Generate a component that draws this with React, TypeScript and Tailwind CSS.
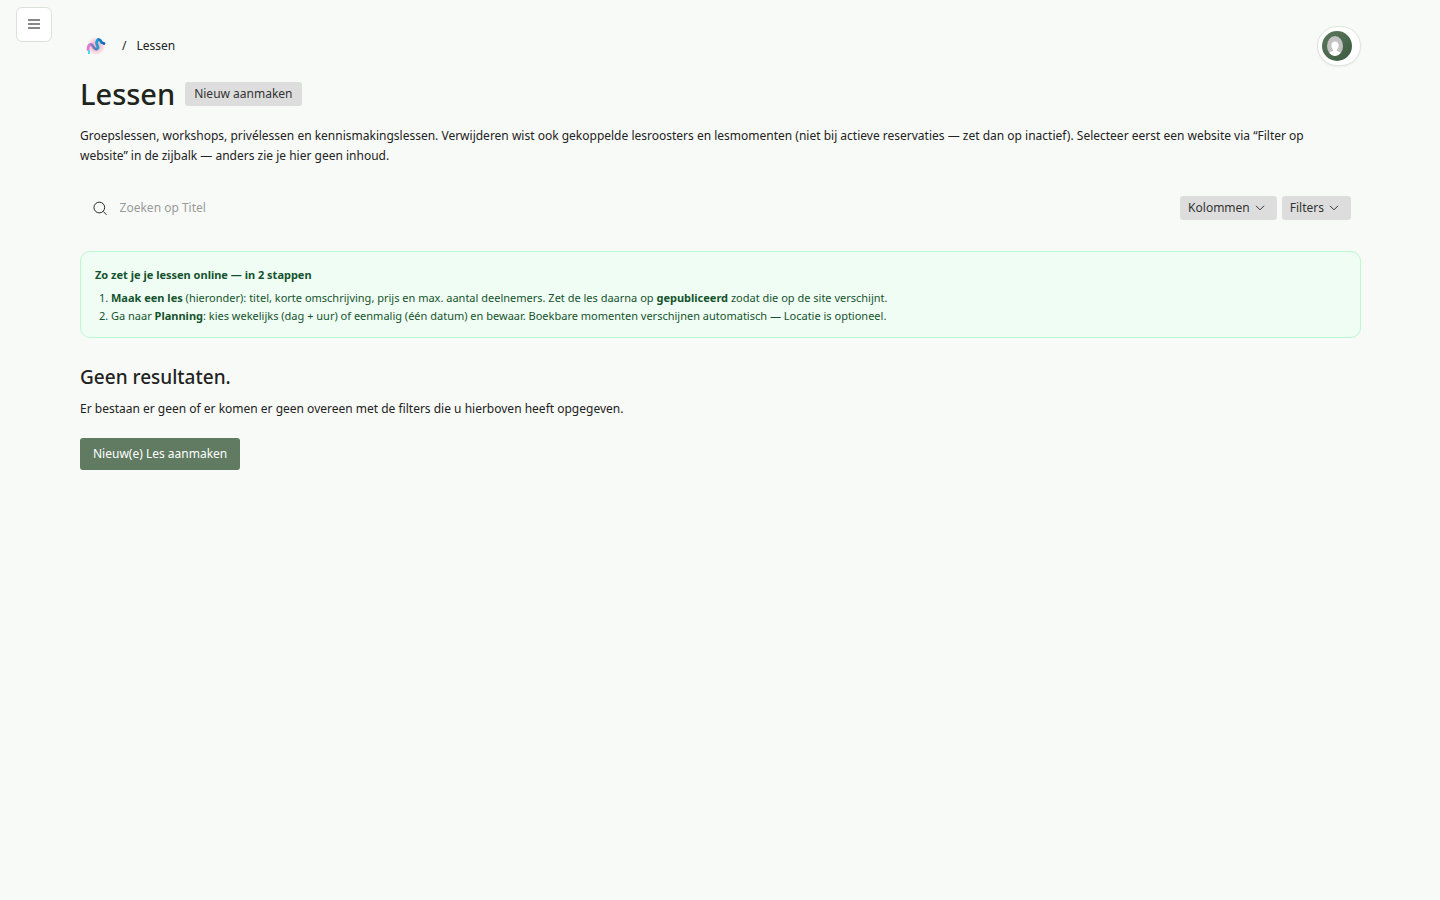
import { useState } from 'react'
import type { ReactNode } from 'react'

function Chevron() {
  return (
    <svg width="10" height="6" viewBox="0 0 10 6" fill="none" stroke="currentColor" aria-hidden="true">
      <path d="M1 0.8 5 4.8 9 0.8" />
    </svg>
  )
}

function Logo() {
  return (
    <svg width="20" height="18" viewBox="0 0 20 18" fill="none" aria-hidden="true">
      <defs>
        <radialGradient id="logo-glow">
          <stop offset="0.4" stopColor="#fbb3c9" stopOpacity="0.95" />
          <stop offset="1" stopColor="#fbc5d5" stopOpacity="0.15" />
        </radialGradient>
        <linearGradient id="logo-line" x1="1" y1="12" x2="19" y2="5" gradientUnits="userSpaceOnUse">
          <stop offset="0" stopColor="#f56ccf" />
          <stop offset="0.2" stopColor="#d67fd0" />
          <stop offset="0.4" stopColor="#4a7fb8" />
          <stop offset="0.6" stopColor="#1ba5d6" />
          <stop offset="1" stopColor="#0b55b0" />
        </linearGradient>
      </defs>
      <circle cx="10" cy="9" r="9" fill="url(#logo-glow)" />
      <path
        d="M2 12.500 2.500 9.500Q4 6.500 6 8L8 11Q11 13.500 12 10.500L10.500 6Q11 2.500 13 2.500Q14.500 3 15.500 5.500L18 6.500"
        stroke="url(#logo-line)"
        strokeWidth="2.8"
        strokeLinecap="round"
        strokeLinejoin="round"
      />
      <path d="M3 13V17" stroke="#4dd8ec" strokeWidth="2" />
    </svg>
  )
}

function Avatar() {
  return (
    <svg width="30" height="30" viewBox="0 0 30 30" aria-hidden="true">
      <defs>
        <clipPath id="avatar-clip">
          <ellipse cx="13" cy="15" rx="8" ry="10" />
        </clipPath>
        <linearGradient id="avatar-bg" x1="0" y1="0" x2="1" y2="1">
          <stop offset="0" stopColor="#5a7a5c" />
          <stop offset="1" stopColor="#3d5a40" />
        </linearGradient>
      </defs>
      <circle cx="15" cy="15" r="15" fill="url(#avatar-bg)" />
      <g clipPath="url(#avatar-clip)">
        <rect x="4" y="4" width="18" height="22" fill="#c3c3c3" />
        <path
          d="M13 10.500c2.400 0 3.600 1.700 3.600 4.100 0 1.700-.7 3-1.600 3.900v1.500c2.500.6 4.500 1.600 5 6H6c.5-4.400 2.500-5.400 5-6v-1.500c-.9-.9-1.600-2.200-1.600-3.900 0-2.400 1.200-4.100 3.600-4.100z"
          fill="#fff"
        />
      </g>
    </svg>
  )
}

function Pill({ children, menu }: { children: ReactNode; menu?: boolean }) {
  return (
    <button
      type="button"
      className={`flex h-6 items-center gap-[5px] rounded-[3px] bg-[#dddddd] text-[#333333] hover:bg-[#d0d0d0] ${
        menu ? 'pr-3 pl-2' : 'px-[9px]'
      }`}
    >
      {children}
      {menu && <Chevron />}
    </button>
  )
}

export default function App() {
  const [query, setQuery] = useState('')

  return (
    <div className="min-h-screen bg-[#f8faf7] pr-[79px] pl-20 font-['Noto_Sans',sans-serif] text-[12px] leading-5 text-[#222222]">
      <button
        type="button"
        aria-label="Menu"
        className="absolute top-[7px] left-4 flex h-[35px] w-9 items-center justify-center rounded-md border border-[#d9e2d8] bg-white text-[#888888]"
      >
        <svg width="12" height="11" viewBox="0 0 12 11" fill="currentColor" aria-hidden="true">
          <path d="M0 0h12v2H0zM0 4h12v2H0zM0 8h12v2H0z" />
        </svg>
      </button>

      <header className="flex items-center justify-between pt-[26px]">
        <nav className="flex items-center" aria-label="Kruimelpad">
          <a href="#" aria-label="Dashboard" className="ml-1.5">
            <Logo />
          </a>
          <span className="mr-2.5 ml-4">/</span>
          <span>Lessen</span>
        </nav>
        <button
          type="button"
          aria-label="Account"
          className="flex h-10 w-11 items-center rounded-full border border-[#dde5dc] bg-white pl-1 shadow-xs"
        >
          <Avatar />
        </button>
      </header>

      <main>
        <div className="mt-2 flex h-10 items-center gap-2.5">
          <h1 className="text-[29px] leading-10 font-medium text-[#20251c]">Lessen</h1>
          <Pill>Nieuw aanmaken</Pill>
        </div>
        <p className="mt-3 pr-10">
          Groepslessen, workshops, privélessen en kennismakingslessen. Verwijderen wist ook gekoppelde lesroosters en
          lesmomenten (niet bij actieve reservaties — zet dan op inactief). Selecteer eerst een website via “Filter op
          website” in de zijbalk — anders zie je hier geen inhoud.
        </p>

        <div className="mt-[30px] flex items-center gap-[5px] pr-2.5 pl-3">
          <label className="flex flex-1 items-center gap-[11px]">
            <svg width="17" height="17" viewBox="0 0 17 17" fill="none" stroke="#222222" aria-hidden="true">
              <circle cx="7.500" cy="7.500" r="5.500" />
              <path d="m11.500 11.500 3.500 3.500" />
            </svg>
            <input
              type="text"
              aria-label="Zoeken op Titel"
              placeholder="Zoeken op Titel"
              value={query}
              onChange={(e) => setQuery(e.target.value)}
              className="w-full bg-transparent outline-none placeholder:text-[#9a9a9a]"
            />
          </label>
          <Pill menu>Kolommen</Pill>
          <Pill menu>Filters</Pill>
        </div>

        <section className="mt-[31px] rounded-[10px] border border-[#bbf7d0] bg-[#f0fdf4] px-3.5 pt-3.5 pb-3 text-[11px] leading-[18px] text-[#14532d]">
          <h2 className="mb-[5px] font-bold">Zo zet je je lessen online — in 2 stappen</h2>
          <ol className="list-decimal pl-4">
            <li>
              <strong>Maak een les</strong> (hieronder): titel, korte omschrijving, prijs en max. aantal deelnemers. Zet
              de les daarna op <strong>gepubliceerd</strong> zodat die op de site verschijnt.
            </li>
            <li>
              Ga naar <strong>Planning</strong>: kies wekelijks (dag + uur) of eenmalig (één datum) en bewaar. Boekbare
              momenten verschijnen automatisch — Locatie is optioneel.
            </li>
          </ol>
        </section>

        <h2 className="mt-[27px] text-[19px] leading-6 font-medium">Geen resultaten.</h2>
        <p className="mt-2.5">Er bestaan er geen of er komen er geen overeen met de filters die u hierboven heeft opgegeven.</p>
        <button type="button" className="mt-[19px] h-8 rounded-[3px] bg-[#607b61] px-[13px] text-white hover:bg-[#526a53]">
          Nieuw(e) Les aanmaken
        </button>
      </main>
    </div>
  )
}
